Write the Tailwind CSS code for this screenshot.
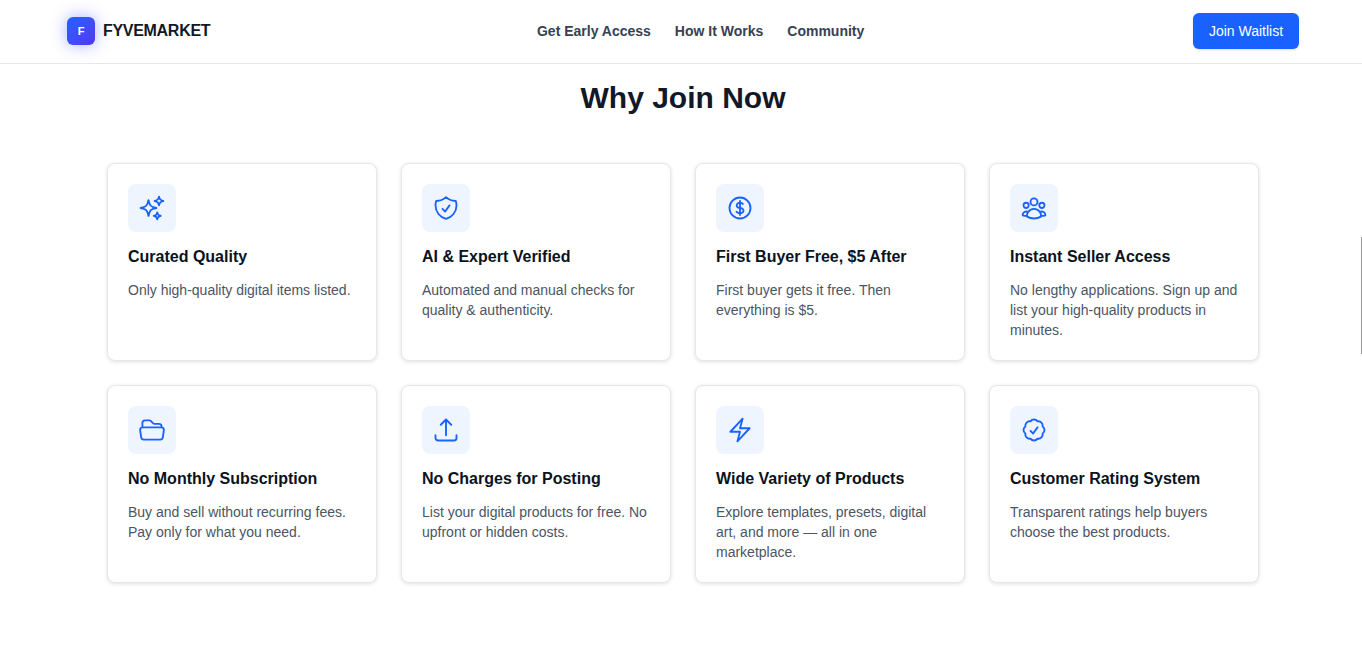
<!DOCTYPE html>
<html lang="en">
<head>
  <meta charset="utf-8"/>
  <meta content="width=device-width, initial-scale=1.0" name="viewport"/>
  <title>FYVEMARKET</title>
  <script src="https://cdn.jsdelivr.net/npm/@tailwindcss/browser@4"></script>
</head>
<body class="bg-white font-['Liberation_Sans',Arial,sans-serif]">
<div class="relative h-[645px] overflow-hidden">
  <div class="w-[1366px]">

    <!-- Header -->
    <header class="h-16 pb-px border-b border-gray-200 px-[67px] flex items-center justify-between">
      <div class="flex items-center gap-2">
        <div class="w-7 h-7 rounded-md bg-gradient-to-br from-[#1a62ff] to-[#4f35f3] shadow-[0_0_16px_rgba(60,80,255,0.45)] flex items-center justify-center text-white text-[11px] font-bold">F</div>
        <span class="text-base font-bold tracking-[-0.3px] text-[#111827]">FYVEMARKET</span>
      </div>
      <nav class="mr-[2px] flex items-center gap-6 text-sm font-semibold text-gray-700">
        <a href="#">Get Early Access</a>
        <a href="#">How It Works</a>
        <a href="#">Community</a>
      </nav>
      <button class="h-9 w-[106px] rounded-md bg-[#1a62ff] text-white text-sm shadow-sm">Join Waitlist</button>
    </header>

    <!-- Why Join Now -->
    <main class="w-[1152px] mx-auto">
      <h2 class="text-3xl leading-[40px] font-bold text-[#111827] text-center mt-[14px] mb-[45px]">Why Join Now</h2>

      <div class="grid grid-cols-4 gap-6">

        <div class="h-[198px] p-5 bg-white border border-gray-200 rounded-lg shadow-[0_1px_4px_rgba(0,0,0,0.12)]">
          <div class="w-12 h-12 rounded-lg bg-[#eff5ff] flex items-center justify-center">
            <svg class="w-7 h-7 text-[#1a62ff]" fill="none" viewBox="0 0 24 24" stroke="currentColor" stroke-width="1.6" stroke-linecap="round" stroke-linejoin="round"><path d="M9.813 15.904 9 18.75l-.813-2.846a4.5 4.5 0 0 0-3.09-3.09L2.25 12l2.846-.813a4.5 4.5 0 0 0 3.09-3.09L9 5.25l.813 2.846a4.5 4.5 0 0 0 3.09 3.09L15.75 12l-2.846.813a4.5 4.5 0 0 0-3.09 3.09ZM18.259 8.715 18 9.75l-.259-1.035a3.375 3.375 0 0 0-2.455-2.456L14.25 6l1.036-.259a3.375 3.375 0 0 0 2.455-2.456L18 2.25l.259 1.035a3.375 3.375 0 0 0 2.456 2.456L21.75 6l-1.035.259a3.375 3.375 0 0 0-2.456 2.456ZM16.894 20.567 16.5 21.75l-.394-1.183a2.25 2.25 0 0 0-1.423-1.423L13.5 18.75l1.183-.394a2.25 2.25 0 0 0 1.423-1.423l.394-1.183.394 1.183a2.25 2.25 0 0 0 1.423 1.423l1.183.394-1.183.394a2.25 2.25 0 0 0-1.423 1.423Z"/></svg>
          </div>
          <h3 class="mt-[13px] text-base leading-6 font-bold text-[#0b1220]">Curated Quality</h3>
          <p class="mt-[11px] text-sm leading-5 text-gray-600">Only high-quality digital items listed.</p>
        </div>

        <div class="h-[198px] p-5 bg-white border border-gray-200 rounded-lg shadow-[0_1px_4px_rgba(0,0,0,0.12)]">
          <div class="w-12 h-12 rounded-lg bg-[#eff5ff] flex items-center justify-center">
            <svg class="w-7 h-7 text-[#1a62ff]" fill="none" viewBox="0 0 24 24" stroke="currentColor" stroke-width="1.6" stroke-linecap="round" stroke-linejoin="round"><path d="M9 12.75 11.25 15 15 9.75m-3-7.036A11.959 11.959 0 0 1 3.598 6 11.99 11.99 0 0 0 3 9.749c0 5.592 3.824 10.29 9 11.623 5.176-1.332 9-6.03 9-11.622 0-1.31-.21-2.571-.598-3.751h-.152c-3.196 0-6.1-1.248-8.25-3.285Z"/></svg>
          </div>
          <h3 class="mt-[13px] text-base leading-6 font-bold text-[#0b1220]">AI &amp; Expert Verified</h3>
          <p class="mt-[11px] text-sm leading-5 text-gray-600">Automated and manual checks for quality &amp; authenticity.</p>
        </div>

        <div class="h-[198px] p-5 bg-white border border-gray-200 rounded-lg shadow-[0_1px_4px_rgba(0,0,0,0.12)]">
          <div class="w-12 h-12 rounded-lg bg-[#eff5ff] flex items-center justify-center">
            <svg class="w-7 h-7 text-[#1a62ff]" fill="none" viewBox="0 0 24 24" stroke="currentColor" stroke-width="1.6" stroke-linecap="round" stroke-linejoin="round"><path d="M12 6v12m-3-2.818.879.659c1.171.879 3.07.879 4.242 0 1.172-.879 1.172-2.303 0-3.182C13.536 12.219 12.768 12 12 12c-.725 0-1.45-.22-2.003-.659-1.106-.879-1.106-2.303 0-3.182s2.9-.879 4.006 0l.415.33M21 12a9 9 0 1 1-18 0 9 9 0 0 1 18 0Z"/></svg>
          </div>
          <h3 class="mt-[13px] text-base leading-6 font-bold text-[#0b1220]">First Buyer Free, $5 After</h3>
          <p class="mt-[11px] text-sm leading-5 text-gray-600">First buyer gets it free. Then everything is $5.</p>
        </div>

        <div class="h-[198px] p-5 bg-white border border-gray-200 rounded-lg shadow-[0_1px_4px_rgba(0,0,0,0.12)]">
          <div class="w-12 h-12 rounded-lg bg-[#eff5ff] flex items-center justify-center">
            <svg class="w-7 h-7 text-[#1a62ff]" fill="none" viewBox="0 0 24 24" stroke="currentColor" stroke-width="1.6" stroke-linecap="round" stroke-linejoin="round"><path d="M18 18.72a9.094 9.094 0 0 0 3.741-.479 3 3 0 0 0-4.682-2.72m.94 3.198.001.031c0 .225-.012.447-.037.666A11.944 11.944 0 0 1 12 21c-2.17 0-4.207-.576-5.963-1.584A6.062 6.062 0 0 1 6 18.719m12 0a5.971 5.971 0 0 0-.941-3.197m0 0A5.995 5.995 0 0 0 12 12.75a5.995 5.995 0 0 0-5.058 2.772m0 0a3 3 0 0 0-4.681 2.72 8.986 8.986 0 0 0 3.74.477m.94-3.197a5.971 5.971 0 0 0-.94 3.197M15 6.75a3 3 0 1 1-6 0 3 3 0 0 1 6 0Zm6 3a2.25 2.25 0 1 1-4.5 0 2.25 2.25 0 0 1 4.5 0Zm-13.5 0a2.25 2.25 0 1 1-4.5 0 2.25 2.25 0 0 1 4.5 0Z"/></svg>
          </div>
          <h3 class="mt-[13px] text-base leading-6 font-bold text-[#0b1220]">Instant Seller Access</h3>
          <p class="mt-[11px] text-sm leading-5 text-gray-600">No lengthy applications. Sign up and list your high-quality products in minutes.</p>
        </div>

        <div class="h-[198px] p-5 bg-white border border-gray-200 rounded-lg shadow-[0_1px_4px_rgba(0,0,0,0.12)]">
          <div class="w-12 h-12 rounded-lg bg-[#eff5ff] flex items-center justify-center">
            <svg class="w-7 h-7 text-[#1a62ff]" fill="none" viewBox="0 0 24 24" stroke="currentColor" stroke-width="1.6" stroke-linecap="round" stroke-linejoin="round"><path d="M3.75 9.776c.112-.017.227-.026.344-.026h15.812c.117 0 .232.009.344.026m-16.5 0a2.25 2.25 0 0 0-1.883 2.542l.857 6a2.25 2.25 0 0 0 2.227 1.932H19.05a2.25 2.25 0 0 0 2.227-1.932l.857-6a2.25 2.25 0 0 0-1.883-2.542m-16.5 0V6A2.25 2.25 0 0 1 6 3.75h3.879a1.5 1.5 0 0 1 1.06.44l2.122 2.12a1.5 1.5 0 0 0 1.06.44H18A2.25 2.25 0 0 1 20.25 9v.776"/></svg>
          </div>
          <h3 class="mt-[13px] text-base leading-6 font-bold text-[#0b1220]">No Monthly Subscription</h3>
          <p class="mt-[11px] text-sm leading-5 text-gray-600">Buy and sell without recurring fees. Pay only for what you need.</p>
        </div>

        <div class="h-[198px] p-5 bg-white border border-gray-200 rounded-lg shadow-[0_1px_4px_rgba(0,0,0,0.12)]">
          <div class="w-12 h-12 rounded-lg bg-[#eff5ff] flex items-center justify-center">
            <svg class="w-7 h-7 text-[#1a62ff]" fill="none" viewBox="0 0 24 24" stroke="currentColor" stroke-width="1.6" stroke-linecap="round" stroke-linejoin="round"><path d="M3 16.5v2.25A2.25 2.25 0 0 0 5.25 21h13.5A2.25 2.25 0 0 0 21 18.75V16.5m-13.5-9L12 3m0 0 4.5 4.5M12 3v13.5"/></svg>
          </div>
          <h3 class="mt-[13px] text-base leading-6 font-bold text-[#0b1220]">No Charges for Posting</h3>
          <p class="mt-[11px] text-sm leading-5 text-gray-600">List your digital products for free. No upfront or hidden costs.</p>
        </div>

        <div class="h-[198px] p-5 bg-white border border-gray-200 rounded-lg shadow-[0_1px_4px_rgba(0,0,0,0.12)]">
          <div class="w-12 h-12 rounded-lg bg-[#eff5ff] flex items-center justify-center">
            <svg class="w-7 h-7 text-[#1a62ff]" fill="none" viewBox="0 0 24 24" stroke="currentColor" stroke-width="1.6" stroke-linecap="round" stroke-linejoin="round"><path d="m3.75 13.5 10.5-11.25L12 10.5h8.25L9.75 21.75 12 13.5H3.75Z"/></svg>
          </div>
          <h3 class="mt-[13px] text-base leading-6 font-bold text-[#0b1220]">Wide Variety of Products</h3>
          <p class="mt-[11px] text-sm leading-5 text-gray-600">Explore templates, presets, digital art, and more — all in one marketplace.</p>
        </div>

        <div class="h-[198px] p-5 bg-white border border-gray-200 rounded-lg shadow-[0_1px_4px_rgba(0,0,0,0.12)]">
          <div class="w-12 h-12 rounded-lg bg-[#eff5ff] flex items-center justify-center">
            <svg class="w-7 h-7 text-[#1a62ff]" fill="none" viewBox="0 0 24 24" stroke="currentColor" stroke-width="1.6" stroke-linecap="round" stroke-linejoin="round"><path d="M9 12.75 11.25 15 15 9.75M21 12c0 1.268-.63 2.39-1.593 3.068a3.745 3.745 0 0 1-1.043 3.296 3.745 3.745 0 0 1-3.296 1.043A3.745 3.745 0 0 1 12 21c-1.268 0-2.39-.63-3.068-1.593a3.746 3.746 0 0 1-3.296-1.043 3.746 3.746 0 0 1-1.043-3.296A3.745 3.745 0 0 1 3 12c0-1.268.63-2.39 1.593-3.068a3.745 3.745 0 0 1 1.043-3.296 3.746 3.746 0 0 1 3.296-1.043A3.746 3.746 0 0 1 12 3c1.268 0 2.39.63 3.068 1.593a3.746 3.746 0 0 1 3.296 1.043 3.746 3.746 0 0 1 1.043 3.296A3.745 3.745 0 0 1 21 12Z"/></svg>
          </div>
          <h3 class="mt-[13px] text-base leading-6 font-bold text-[#0b1220]">Customer Rating System</h3>
          <p class="mt-[11px] text-sm leading-5 text-gray-600">Transparent ratings help buyers choose the best products.</p>
        </div>

      </div>
    </main>
  </div>

  <!-- scrollbar thumb -->
  <div class="absolute right-0 top-[237px] w-px h-[117px] bg-[#999]"></div>
</div>
</body>
</html>
